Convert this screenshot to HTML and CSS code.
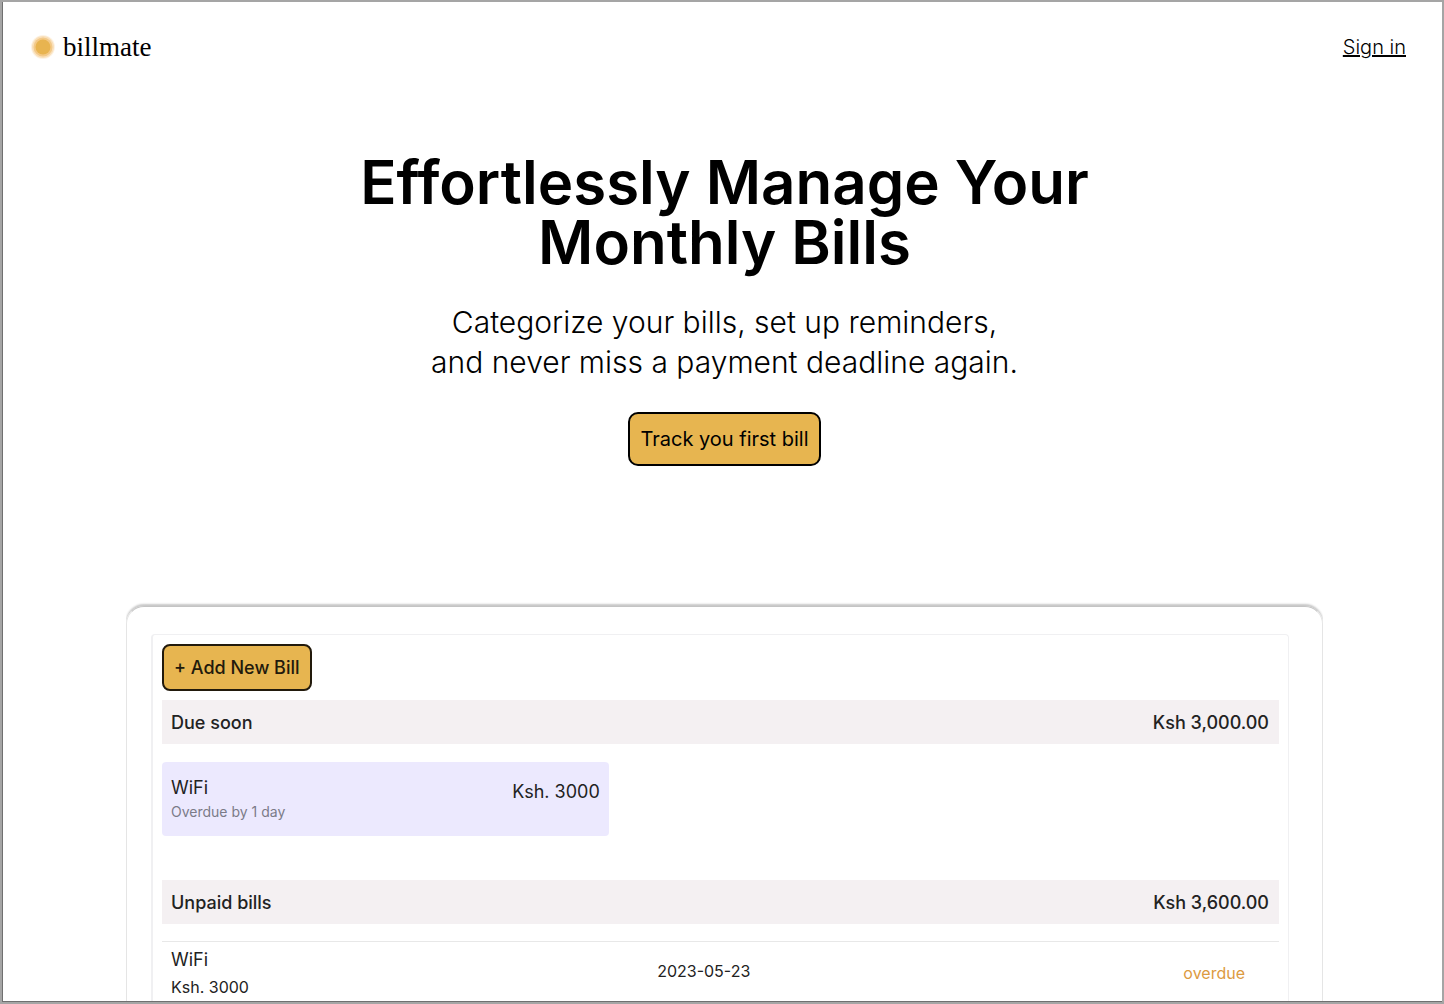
FILE: index.html
```html
<!DOCTYPE html>
<html lang="en">
<head>
<meta charset="utf-8">
<meta name="viewport" content="width=device-width, initial-scale=1">
<title>billmate</title>
<link rel="stylesheet" href="styles.css">
</head>
<body>
<div class="page">
  <header class="header">
    <a class="brand" href="#">
      <svg class="brand-icon" viewBox="0 0 24 24" aria-hidden="true">
        <circle cx="12" cy="12" r="12" fill="#fdf3e4"/>
        <circle cx="12" cy="12" r="11" fill="#f9e0bb"/>
        <circle cx="12" cy="12" r="9.5" fill="#f3c988"/>
        <circle cx="12" cy="12" r="7.5" fill="#e8b450"/>
      </svg>
      <span>billmate</span>
    </a>
    <a class="sign-in" href="#">Sign in</a>
  </header>
  <main class="main">
    <section class="hero">
      <h1 class="title">Effortlessly Manage Your<br>Monthly Bills</h1>
      <p class="lead">Categorize your bills, set up reminders,<br>and never miss a payment deadline again.</p>
      <button class="button button-large" type="button">Track you first bill</button>
    </section>
    <section class="preview">
      <div class="panel">
        <button class="button button-add" type="button">+ Add New Bill</button>
        <h2 class="bar"><span>Due soon</span><span>Ksh 3,000.00</span></h2>
        <div class="due">
          <div>
            <p class="due-name">WiFi</p>
            <p class="due-note">Overdue by 1 day</p>
          </div>
          <p class="due-amount">Ksh. 3000</p>
        </div>
        <h2 class="bar"><span>Unpaid bills</span><span>Ksh 3,600.00</span></h2>
        <table class="bills">
          <tbody>
            <tr>
              <td class="bill"><p class="bill-name">WiFi</p><p class="bill-amount">Ksh. 3000</p></td>
              <td class="bill-date">2023-05-23</td>
              <td class="bill-status">overdue</td>
            </tr>
          </tbody>
        </table>
      </div>
    </section>
  </main>
</div>
</body>
</html>
```

FILE: styles.css
```css
* {
  box-sizing: border-box;
}

body {
  margin: 0;
  background: #a5a5a5;
  color: #000;
  font-family: Inter, "Liberation Sans", sans-serif;
  font-optical-sizing: none;
}

h1,
h2,
p {
  margin: 0;
}

.page {
  display: flex;
  flex-direction: column;
  min-height: calc(100vh - 4px);
  margin: 2px;
  border-left: 1px solid #707070;
  border-bottom: 1px solid #707070;
  background: #fff;
}

.header {
  display: flex;
  align-items: center;
  justify-content: space-between;
  height: 90px;
  padding: 0 36px 0 28px;
}

.brand {
  display: flex;
  align-items: center;
  gap: 8px;
  color: #000;
  font-family: "Liberation Serif", serif;
  font-size: 27px;
  line-height: 32px;
  text-decoration: none;
}

.brand-icon {
  width: 24px;
  height: 24px;
}

.sign-in {
  color: #000;
  font-size: 20px;
  font-weight: 300;
  line-height: 28px;
}

.main {
  flex: 1;
  display: flex;
  flex-direction: column;
  padding: 60px 119px 0 123px;
}

.hero {
  display: flex;
  flex-direction: column;
  align-items: center;
  text-align: center;
}

.title {
  font-size: 60px;
  font-weight: 600;
  line-height: 60px;
}

.lead {
  margin-top: 30px;
  font-size: 30px;
  font-weight: 300;
  line-height: 40px;
}

.button {
  border: 2px solid #000;
  border-radius: 8px;
  background: #e7b550;
  color: #000;
  font-family: inherit;
  cursor: pointer;
}

.button-large {
  height: 54px;
  margin-top: 30px;
  padding: 0 10px;
  border-radius: 10px;
  font-size: 20px;
}

.preview {
  flex: 1;
  display: flex;
  margin-top: 140px;
  padding: 27px 33px 0 24px;
  border: 1px solid #e5e5e5;
  border-bottom: 0;
  border-top-color: #c4c4c4;
  border-radius: 18px 18px 0 0;
  box-shadow: 0 -2px 2px #c8c8c8;
  clip-path: inset(-6px 0 0);
}

.panel {
  flex: 1;
  padding: 9px 9px 0;
  border: 1px solid #f0f0f2;
  border-bottom: 0;
  border-left-width: 2px;
  border-radius: 4px 4px 0 0;
  color: #222;
}

.button-add {
  height: 47px;
  padding: 0 10px;
  border-color: #221a0c;
  color: #221a0c;
  font-size: 18px;
  font-weight: 500;
}

.bar {
  display: flex;
  align-items: center;
  justify-content: space-between;
  height: 44px;
  margin-top: 9px;
  padding: 0 10px 0 9px;
  background: #f4f0f2;
  font-size: 18px;
  font-weight: 500;
}

.due {
  display: flex;
  justify-content: space-between;
  width: 40%;
  height: 74px;
  margin: 18px 0 44px;
  padding: 14px 9px;
  border-radius: 4px;
  background: #ece9fe;
}

.due-name,
.due-amount {
  font-size: 18px;
  line-height: 24px;
}

.due-amount {
  padding-top: 4px;
}

.due-note {
  color: #7b7b88;
  font-size: 14px;
  line-height: 24px;
}

.bills {
  width: 100%;
  margin-top: 17px;
  border-top: 1px solid #e8e8e8;
  border-collapse: collapse;
  table-layout: fixed;
}

.bills td {
  padding: 4px 9px 0;
}

.bill {
  width: 35%;
}

.bill-name {
  font-size: 18px;
  line-height: 28px;
}

.bill-amount {
  font-size: 16px;
  line-height: 26px;
}

.bills .bill-date {
  width: 27%;
  font-size: 16px;
  line-height: 50px;
  text-align: center;
  vertical-align: top;
}

.bills .bill-status {
  padding-right: 34px;
  color: #dc9a3f;
  font-size: 16px;
  text-align: right;
}
```
